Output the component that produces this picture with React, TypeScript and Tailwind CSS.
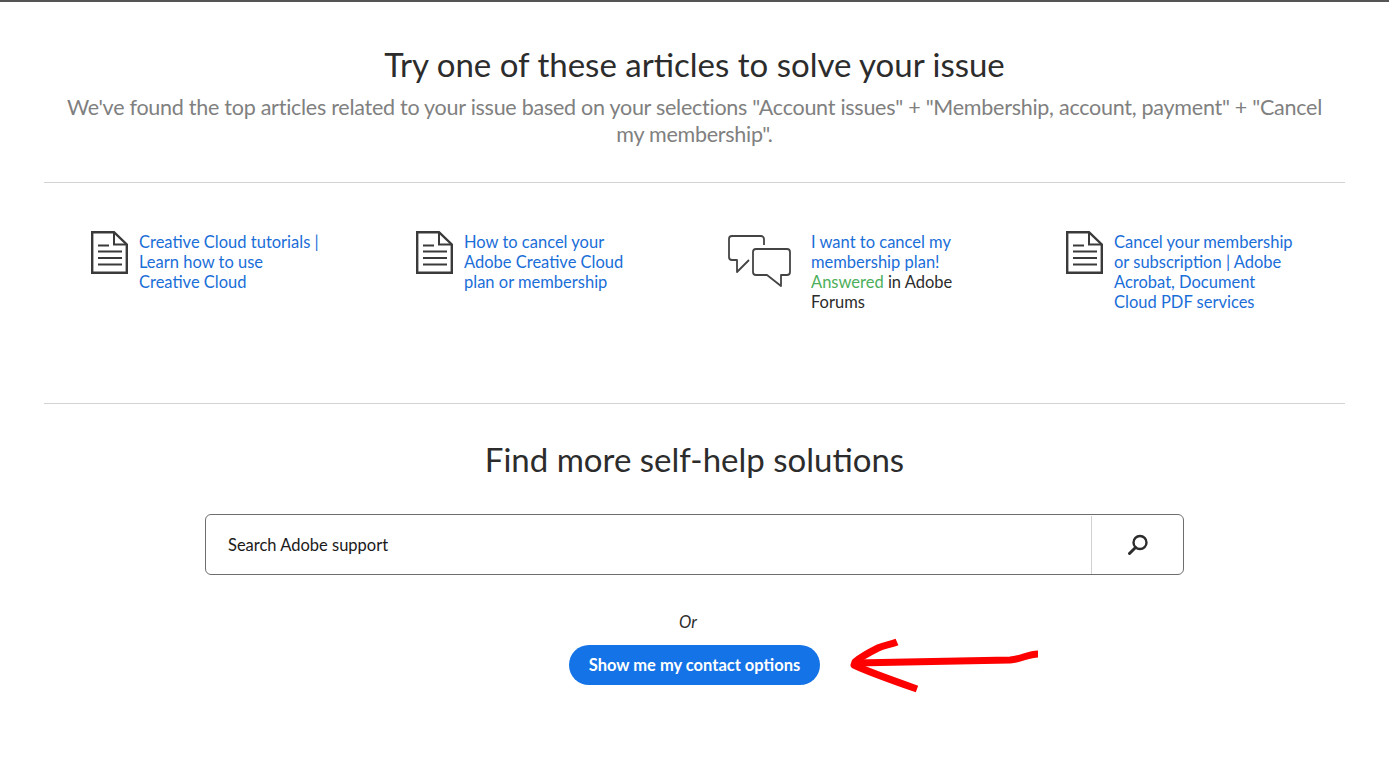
const font = "[font-family:Lato,sans-serif]";

function DocIcon() {
  return (
    <svg viewBox="0 0 37 43" width="37" height="43" fill="none" stroke="#3a3a3a" strokeWidth="2" className="shrink-0">
      <path d="M1.2 1.2H23L35.8 13.5V41.8H1.2Z" strokeWidth="2.4" />
      <path d="M23 1.5V13.5H35.5" />
      <path d="M7 14.5H18M7 20.5H31M7 27H31M7 33.5H31" />
    </svg>
  );
}

function ChatIcon() {
  return (
    <svg viewBox="0 0 64 54" width="64" height="54" fill="none" stroke="#444" strokeWidth="1.8" strokeLinejoin="round" className="mt-[4px] shrink-0">
      <path d="M36 10V4a3 3 0 0 0-3-3H4a3 3 0 0 0-3 3v18a3 3 0 0 0 3 3h5v12l12-12" />
      <path d="M28 14h31a3 3 0 0 1 3 3v20a3 3 0 0 1-3 3h-6v11L39 40H28a3 3 0 0 1-3-3V17a3 3 0 0 1 3-3Z" />
    </svg>
  );
}

const link = "pt-[1px] text-[16.5px] leading-[20px] text-[#1a6ed8]";

export default function App() {
  return (
    <div className={`${font} relative h-[772px] w-[1389px] overflow-hidden bg-white border-t-2 border-[#555555]`}>
      <div className="mx-[44px]">
        <h1 className="mt-[38px] text-center text-[33px] leading-[48px] text-[#2c2c2c]">
          Try one of these articles to solve your issue
        </h1>
        <p className="mx-auto mt-[6px] w-[1270px] text-center text-[21.5px] leading-[27px] tracking-[-0.26px] text-[#808080]">
          We've found the top articles related to your issue based on your selections "Account issues" + "Membership, account, payment" + "Cancel my membership".
        </p>
        <div className="mt-[34px] flex h-[222px] items-start border-y border-[#d3d3d3] pt-[48px]">
          <div className="ml-[47px] flex w-[325px] gap-[11px]">
            <DocIcon />
            <a className={`w-[185px] ${link}`}>Creative Cloud tutorials | Learn how to use Creative Cloud</a>
          </div>
          <div className="flex w-[312px] gap-[11px]">
            <DocIcon />
            <a className={`w-[170px] ${link}`}>How to cancel your Adobe Creative Cloud plan or membership</a>
          </div>
          <div className="flex w-[338px] gap-[19px]">
            <ChatIcon />
            <div className="w-[150px] pt-[1px] text-[16.5px] leading-[20px] text-[#2c2c2c]">
              <a className="text-[#1a6ed8]">I want to cancel my membership plan!</a>
              <br />
              <span className="text-[#4caf5a]">Answered</span> in Adobe Forums
            </div>
          </div>
          <div className="flex gap-[11px]">
            <DocIcon />
            <a className={`w-[185px] ${link}`}>Cancel your membership or subscription | Adobe Acrobat, Document Cloud PDF services</a>
          </div>
        </div>
        <h2 className="mt-[31px] text-center text-[33px] leading-[48px] text-[#2c2c2c]">Find more self-help solutions</h2>
        <div className="mx-auto mt-[31px] flex h-[61px] w-[979px] items-center rounded-[6px] border border-[#6e6e6e]">
          <span className="flex-1 pl-[22px] pt-[1px] text-[16.5px] text-[#1a1a1a]">Search Adobe support</span>
          <div className="flex h-[58px] w-[92px] items-center justify-center border-l border-[#d0d0d0]">
            <svg viewBox="0 0 24 24" width="24" height="24" fill="none" stroke="#2c2c2c" strokeWidth="2.4" strokeLinecap="round">
              <circle cx="14" cy="9.5" r="6.5" />
              <path d="M9.5 14.5L3.5 20.5" strokeWidth="3" />
            </svg>
          </div>
        </div>
        <p className="mt-[36px] w-[1288px] text-center text-[16.5px] italic leading-[22px] text-[#2c2c2c]">Or</p>
        <div className="mt-[12px] flex justify-center">
          <button className="h-[40px] w-[251px] rounded-[20px] bg-[#1473e6] text-[16.5px] font-bold text-white">Show me my contact options</button>
        </div>
      </div>
      <svg className="absolute left-[850px] top-[635px]" width="192" height="56" viewBox="0 0 192 56" fill="none" stroke="#ff0000" strokeWidth="7" strokeLinejoin="round">
        <path d="M47 5C40 8 34 8 28 11C20 15 12 19 5 25L4 28C12 32 30 39 67 52" />
        <path d="M5 26C50 25 100 24 160 23C172 22 178 17 188 17" />
      </svg>
    </div>
  );
}
